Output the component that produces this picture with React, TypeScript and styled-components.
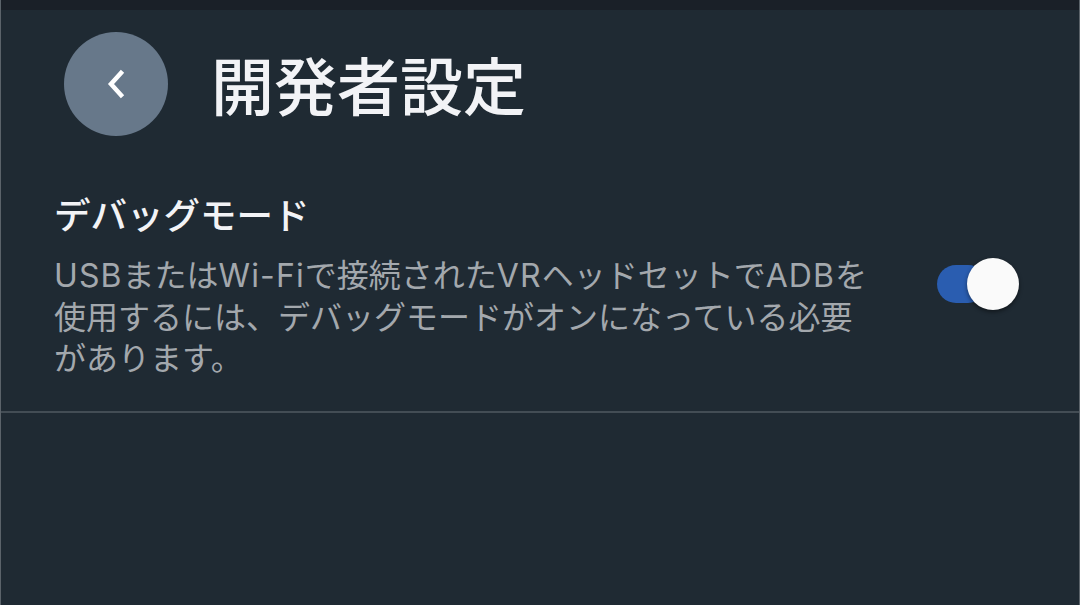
import React, { useState } from "react";
import styled, { createGlobalStyle } from "styled-components";

const GlobalStyle = createGlobalStyle`
  html, body {
    margin: 0;
    padding: 0;
    background: #1f2a33;
  }
  body {
    font-family: "Inter", "Noto Sans CJK JP", sans-serif;
  }
`;

const Page = styled.div`
  width: 1080px;
  height: 605px;
  box-sizing: border-box;
  background: #1f2a33;
  border-left: 1px solid #5b636a;
  border-right: 1px solid #5b636a;
  display: flex;
  flex-direction: column;
  overflow: hidden;
`;

const TopStrip = styled.div`
  height: 10px;
  background: #1a2028;
  flex-shrink: 0;
`;

const Header = styled.div`
  display: flex;
  align-items: center;
  gap: 43px;
  padding: 22px 0 0 63px;
`;

const BackButton = styled.button`
  width: 104px;
  height: 104px;
  border-radius: 50%;
  border: none;
  background: #67788a;
  display: flex;
  align-items: center;
  justify-content: center;
  padding: 0;
  cursor: pointer;
`;

const Title = styled.h1`
  margin: -3px 0 0 0;
  font-family: "Noto Sans CJK JP", sans-serif;
  font-size: 63px;
  font-weight: 500;
  color: #f2f3f6;
  line-height: 1;
`;

const SettingRow = styled.div`
  display: flex;
  align-items: flex-start;
  padding: 55px 0 31px 53px;
  border-bottom: 2px solid #434d55;
`;

const TextBlock = styled.div`
  width: 840px;
  display: flex;
  flex-direction: column;
`;

const SettingTitle = styled.div`
  font-family: "Noto Sans CJK JP", sans-serif;
  font-size: 36.5px;
  font-weight: 500;
  color: #f2f3f6;
  line-height: 46px;
`;

const SettingDesc = styled.div`
  margin-top: 18px;
  font-family: "Inter", "Noto Sans CJK JP", sans-serif;
  font-size: 32px;
  color: #a3a8ad;
  line-height: 41.5px;
`;

// latin words in the description are set a little wider than Inter
const Latin = styled.span`
  letter-spacing: 1.1px;
`;

const Switch = styled.button<{ on: boolean }>`
  position: relative;
  margin: 74px 0 0 43px;
  width: 50px;
  height: 38px;
  border-radius: 19px;
  border: none;
  padding: 0;
  background: ${(p) => (p.on ? "#2a5db0" : "#5a646d")};
  cursor: pointer;
  flex-shrink: 0;
`;

const Knob = styled.span<{ on: boolean }>`
  position: absolute;
  top: -7px;
  left: ${(p) => (p.on ? "30px" : "-20px")};
  width: 52px;
  height: 52px;
  border-radius: 50%;
  background: #fafafa;
  box-shadow: 0 2px 4px rgba(0, 0, 0, 0.45);
`;

export default function App() {
  const [debug, setDebug] = useState(true);

  return (
    <>
      <GlobalStyle />
      <Page>
        <TopStrip />
        <Header>
          <BackButton aria-label="戻る">
            <svg width="24" height="30" viewBox="0 0 24 30">
              <path
                d="M17 4 L7 15 L17 26"
                fill="none"
                stroke="#ffffff"
                strokeWidth="4.5"
                strokeLinecap="square"
                strokeLinejoin="miter"
              />
            </svg>
          </BackButton>
          <Title>開発者設定</Title>
        </Header>
        <SettingRow>
          <TextBlock>
            <SettingTitle>デバッグモード</SettingTitle>
            <SettingDesc>
              <Latin>USB</Latin>または<Latin>Wi-Fi</Latin>で接続された
              <Latin>VR</Latin>ヘッドセットで<Latin>ADB</Latin>を
              <br />
              使用するには、デバッグモードがオンになっている必要
              <br />
              があります。
            </SettingDesc>
          </TextBlock>
          <Switch on={debug} onClick={() => setDebug(!debug)}>
            <Knob on={debug} />
          </Switch>
        </SettingRow>
      </Page>
    </>
  );
}
